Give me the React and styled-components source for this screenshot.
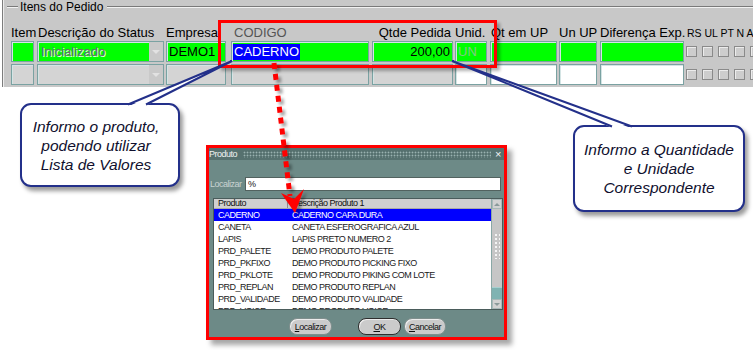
import styled, { createGlobalStyle } from "styled-components";

const GlobalStyle = createGlobalStyle`
  html, body { margin: 0; padding: 0; background: #fff; }
  body { font-family: "Liberation Sans", Arial, sans-serif; }
  * { box-sizing: border-box; }
`;

const Page = styled.div`
  position: relative;
  width: 753px;
  height: 350px;
  overflow: hidden;
  background: #fff;
`;

const Panel = styled.div`
  margin-left: 2px;
  height: 87px;
  background: #c8c8c8;
  border-left: 1px solid #7c7c7c;
  box-shadow: inset 1px 0 0 #ededed;
`;

const Legend = styled.div`
  display: flex;
  align-items: center;
  height: 14px;
  padding-left: 4px;
  font-size: 12px;
  color: #000;
`;

const LegendLine = styled.span`
  height: 2px;
  border-top: 1px solid #7a7a7a;
  border-bottom: 1px solid #f2f2f2;
  width: ${(p) => (p.$w ? `${p.$w}px` : "auto")};
  flex: ${(p) => (p.$w ? "none" : 1)};
`;

const LegendText = styled.span`
  margin: 0 4px 0 2px;
  white-space: nowrap;
`;

const Grid = styled.div`
  display: flex;
  padding-left: 8px;
`;

const Col = styled.div`
  width: ${(p) => p.$w}px;
  flex: none;
  display: flex;
  flex-direction: column;
`;

const Label = styled.div`
  height: 27px;
  padding-bottom: 1px;
  display: flex;
  align-items: flex-end;
  justify-content: ${(p) => (p.$right ? "flex-end" : "flex-start")};
  padding-left: ${(p) => p.$pl || 0}px;
  padding-right: ${(p) => p.$pr || 0}px;
  font-size: 13px;
  line-height: 15px;
  color: ${(p) => (p.$muted ? "#555" : "#000")};
  white-space: nowrap;
`;

const Field = styled.div`
  position: relative;
  width: ${(p) => p.$w}px;
  height: 21px;
  margin-bottom: 2px;
  background: ${(p) => p.$bg};
  border: 1px solid #7aa2a2;
  box-shadow: inset 1px 1px 0 #d4e4e4;
  display: flex;
  align-items: center;
  justify-content: ${(p) => (p.$right ? "flex-end" : "flex-start")};
  padding: 0 2px 0 ${(p) => p.$pl ?? 2}px;
  font-size: 13px;
  color: ${(p) => p.$color || "#000"};
  text-shadow: ${(p) => (p.$emboss ? "1px 1px 0 #d8ffd8" : "none")};
  white-space: nowrap;
  overflow: hidden;
`;

const ComboButton = styled.span`
  position: absolute;
  right: 0;
  top: 0;
  bottom: 0;
  width: 14px;
  background: #c9c9c9;
  display: flex;
  align-items: center;
  justify-content: center;
  &::after {
    content: "";
    border-left: 4px solid transparent;
    border-right: 4px solid transparent;
    border-top: 4px solid #e2e2e2;
  }
`;

const Selected = styled.span`
  background: #0000ff;
  color: #fff;
  line-height: 16px;
  padding: 0 1px;
`;

const CheckLabel = styled.div`
  height: 27px;
  padding: 0 0 2px 1px;
  display: flex;
  align-items: flex-end;
  font-size: 10.5px;
  line-height: 12px;
  white-space: nowrap;
`;

const CheckRow = styled.div`
  height: 23px;
  padding-bottom: 2px;
  display: flex;
  align-items: center;
  gap: 5px;
`;

const Check = styled.span`
  width: 11px;
  height: 11px;
  flex: none;
  border: 1px solid #8a8a8a;
  background: #cdcdcd;
  box-shadow: inset 1px 1px 0 #ececec;
`;

const Highlight = styled.div`
  position: absolute;
  left: 218px;
  top: 20px;
  width: 279px;
  height: 48px;
  border: 3px solid #ff0000;
  box-shadow: 3px 3px 3px rgba(0, 0, 0, 0.3);
`;

const Callout = styled.div`
  position: absolute;
  left: ${(p) => p.$x}px;
  top: ${(p) => p.$y}px;
  width: ${(p) => p.$w}px;
  height: ${(p) => p.$h}px;
  border: 2px solid #23308a;
  border-radius: 11px;
  background: #fff;
  box-shadow: 3px 4px 4px rgba(0, 0, 0, 0.4);
  display: flex;
  align-items: center;
  justify-content: center;
  padding-right: ${(p) => p.$pr || 0}px;
  text-align: center;
  font-style: italic;
  font-size: 15.5px;
  line-height: 19px;
  color: #10102e;
`;

const Overlay = styled.svg`
  position: absolute;
  left: 0;
  top: 0;
  width: 753px;
  height: 350px;
  pointer-events: none;
`;

const Dialog = styled.div`
  position: absolute;
  left: 206px;
  top: 145px;
  width: 301px;
  height: 195px;
  border: 3px solid #ff0000;
  background: #6d8a87;
  box-shadow: 5px 5px 5px rgba(0, 0, 0, 0.35);
  display: flex;
  flex-direction: column;
  font-size: 9px;
  letter-spacing: -0.5px;
  color: #111;
`;

const TitleBar = styled.div`
  height: 12px;
  display: flex;
  align-items: center;
  background: #56716f;
  padding: 0 3px 0 0;
  color: #eef2f2;
`;

const TitleDots = styled.div`
  flex: 1;
  height: 7px;
  margin: 0 4px 0 6px;
  background-image: radial-gradient(circle, #9ab2b0 0.8px, transparent 1.1px);
  background-size: 3px 3px;
`;

const Close = styled.span`
  font-size: 11px;
  line-height: 10px;
  color: #f2f2f2;
`;

const SearchRow = styled.div`
  display: flex;
  align-items: center;
  height: 14px;
  margin-top: 17px;
  padding-left: 1px;
`;

const SearchLabel = styled.span`
  width: 35px;
  color: #c9d3d2;
`;

const SearchInput = styled.div`
  width: 256px;
  height: 14px;
  background: #fff;
  border: 1px solid #52625f;
  padding-left: 2px;
  line-height: 12px;
`;

const List = styled.div`
  display: flex;
  width: 290px;
  height: 112px;
  margin: 7px 0 0 4px;
  background: #fff;
  border: 1px solid #4a5c5b;
  overflow: hidden;
`;

const ListMain = styled.div`
  flex: 1;
  display: flex;
  flex-direction: column;
`;

const ListHeader = styled.div`
  display: grid;
  grid-template-columns: 74px 1fr;
  height: 10px;
  flex: none;
  background: #d0d0d0;
  border-bottom: 1px solid #a9a9a9;
  line-height: 9px;
`;

const HeadCell = styled.span`
  padding-left: 4px;
  border-right: ${(p) => (p.$divider ? "1px solid #8d8d8d" : "none")};
`;

const Row = styled.div`
  display: grid;
  grid-template-columns: 74px 1fr;
  height: 12px;
  flex: none;
  line-height: 12px;
  background: ${(p) => (p.$active ? "#0000ff" : "transparent")};
  color: ${(p) => (p.$active ? "#fff" : "#1a1a1a")};
  & > span {
    padding-left: 4px;
    white-space: nowrap;
  }
`;

const Scroll = styled.div`
  width: 11px;
  flex: none;
  display: flex;
  flex-direction: column;
  background: #c6c6c6;
  border-left: 1px solid #8aa8a6;
`;

const ScrollBtn = styled.div`
  height: 10px;
  flex: none;
  background: #d2d2d2;
  border: 1px solid #a8b8b8;
  display: flex;
  align-items: center;
  justify-content: center;
  &::after {
    content: "";
    border-left: 3px solid transparent;
    border-right: 3px solid transparent;
    ${(p) =>
      p.$up ? "border-bottom: 3px solid #8a9a9a;" : "border-top: 3px solid #8a9a9a;"}
  }
`;

const Track = styled.div`
  flex: 1;
  display: flex;
  flex-direction: column;
  justify-content: space-between;
  padding-top: 24px;
`;

const Grip = styled.div`
  height: 26px;
  margin: 0 2px;
  background-image: radial-gradient(circle, #f4f4f4 0.9px, transparent 1.2px);
  background-size: 4px 4px;
`;

const Thumb = styled.div`
  height: 12px;
  background: #7fb3b2;
  border-top: 1px solid #a7cfcf;
`;

const Buttons = styled.div`
  display: flex;
  align-items: center;
  height: 17px;
  margin-top: 8px;
  padding-left: 80px;
`;

const Button = styled.div`
  width: ${(p) => p.$w}px;
  height: 17px;
  margin-left: ${(p) => p.$ml || 0}px;
  border-radius: 8px;
  background: #cbcbcb;
  border: ${(p) => (p.$default ? "1.5px solid #2e2e2e" : "1px solid #7f8f8d")};
  box-shadow: inset 1px 1px 0 #ececec;
  display: flex;
  align-items: center;
  justify-content: center;
  color: #111;
`;

const products = [
  ["CADERNO", "CADERNO CAPA DURA"],
  ["CANETA", "CANETA ESFEROGRAFICA AZUL"],
  ["LAPIS", "LAPIS PRETO NUMERO 2"],
  ["PRD_PALETE", "DEMO PRODUTO PALETE"],
  ["PRD_PKFIXO", "DEMO PRODUTO PICKING FIXO"],
  ["PRD_PKLOTE", "DEMO PRODUTO PIKING COM LOTE"],
  ["PRD_REPLAN", "DEMO PRODUTO REPLAN"],
  ["PRD_VALIDADE", "DEMO PRODUTO VALIDADE"],
  ["PRD_VOICE", "DEMO PRODUTO VOICE"],
];

const GREEN = "#00ff00";
const GREY = "#d4d4d4";
const WHITE = "#ffffff";

const App = () => {
  return (
    <Page>
      <GlobalStyle />
      <Panel>
        <Legend>
          <LegendLine $w={11} />
          <LegendText>Itens do Pedido</LegendText>
          <LegendLine />
        </Legend>
        <Grid>
          <Col $w={26}>
            <Label>Item</Label>
            <Field $w={23} $bg={GREEN} />
            <Field $w={23} $bg={GREY} />
          </Col>
          <Col $w={129}>
            <Label $pl={1}>Descrição do Status</Label>
            <Field $w={127} $bg={GREEN} $pl={3} $color="#6c6c6c" $emboss>
              Inicializado
              <ComboButton />
            </Field>
            <Field $w={127} $bg={GREY}>
              <ComboButton />
            </Field>
          </Col>
          <Col $w={65}>
            <Label>Empresa</Label>
            <Field $w={60} $bg={GREEN}>DEMO1</Field>
            <Field $w={60} $bg={GREY} />
          </Col>
          <Col $w={141}>
            <Label $pl={3} $muted>CODIGO</Label>
            <Field $w={138} $bg={GREEN} $pl={1}>
              <Selected>CADERNO</Selected>
            </Field>
            <Field $w={138} $bg={GREY} />
          </Col>
          <Col $w={83}>
            <Label $right $pr={4}>Qtde Pedida</Label>
            <Field $w={81} $bg={GREEN} $right>200,00</Field>
            <Field $w={81} $bg={GREY} />
          </Col>
          <Col $w={35}>
            <Label>Unid.</Label>
            <Field $w={32} $bg={GREEN} $color="#86c886">UN</Field>
            <Field $w={32} $bg={WHITE} />
          </Col>
          <Col $w={69}>
            <Label $pl={1}>Qt em UP</Label>
            <Field $w={67} $bg={GREEN} />
            <Field $w={67} $bg={WHITE} />
          </Col>
          <Col $w={41}>
            <Label>Un UP</Label>
            <Field $w={38} $bg={GREEN} />
            <Field $w={38} $bg={WHITE} />
          </Col>
          <Col $w={86}>
            <Label>Diferença Exp.</Label>
            <Field $w={84} $bg={GREEN} />
            <Field $w={84} $bg={WHITE} />
          </Col>
          <Col $w={80}>
            <CheckLabel>RS UL PT N A</CheckLabel>
            <CheckRow>
              <Check /><Check /><Check /><Check /><Check />
            </CheckRow>
            <CheckRow>
              <Check /><Check /><Check /><Check /><Check />
            </CheckRow>
          </Col>
        </Grid>
      </Panel>

      <Highlight />

      <Dialog>
        <TitleBar>
          <span>Produto</span>
          <TitleDots />
          <Close>×</Close>
        </TitleBar>
        <SearchRow>
          <SearchLabel>Localizar</SearchLabel>
          <SearchInput>%</SearchInput>
        </SearchRow>
        <List>
          <ListMain>
            <ListHeader>
              <HeadCell $divider>Produto</HeadCell>
              <HeadCell>Descrição Produto 1</HeadCell>
            </ListHeader>
            {products.map(([code, desc], i) => (
              <Row key={code} $active={i === 0}>
                <span>{code}</span>
                <span>{desc}</span>
              </Row>
            ))}
          </ListMain>
          <Scroll>
            <ScrollBtn $up />
            <Track>
              <Grip />
              <Thumb />
            </Track>
            <ScrollBtn />
          </Scroll>
        </List>
        <Buttons>
          <Button $w={43}><u>L</u>ocalizar</Button>
          <Button $w={43} $ml={26} $default><u>O</u>K</Button>
          <Button $w={42} $ml={3}><u>C</u>ancelar</Button>
        </Buttons>
      </Dialog>

      <Callout $x={20} $y={103} $w={160} $h={84} $pr={8}>
        Informo o produto,
        <br />
        podendo utilizar
        <br />
        Lista de Valores
      </Callout>
      <Callout $x={573} $y={125} $w={172} $h={87}>
        Informo a Quantidade
        <br />
        e Unidade
        <br />
        Correspondente
      </Callout>

      <Overlay viewBox="0 0 753 350">
        <defs>
          <filter id="sh" x="-20%" y="-20%" width="140%" height="140%">
            <feDropShadow dx="3" dy="3" stdDeviation="1.5" floodColor="#000" floodOpacity="0.35" />
          </filter>
        </defs>
        <g>
          <polygon points="129,106 232,61 145,106" fill="#fff" />
          <polyline points="128,104.5 232,61 146,104.5" fill="none" stroke="#23308a" strokeWidth="2" />
          <polygon points="613,128 452,61 631,128" fill="#fff" />
          <polyline points="612,126.5 452,61 632,126.5" fill="none" stroke="#23308a" strokeWidth="2" />
        </g>
        <g filter="url(#sh)">
          <line x1="274" y1="63" x2="290" y2="196" stroke="#ff0000" strokeWidth="5" strokeDasharray="6 5" />
          <polygon points="281,193 294,199 304,189 295,213" fill="#ff0000" />
        </g>
      </Overlay>
    </Page>
  );
};

export default App;
